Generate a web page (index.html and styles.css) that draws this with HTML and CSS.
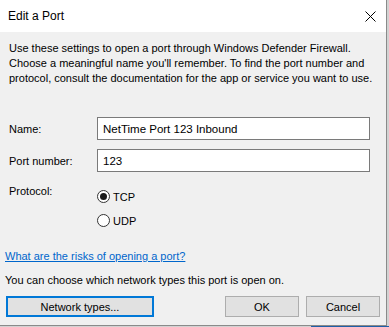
FILE: index.html
```html
<!DOCTYPE html>
<html>
<head>
<meta charset="utf-8">
<link rel="stylesheet" href="styles.css">
</head>
<body>
<div class="dialog">
  <div class="titlebar">
    <span class="title">Edit a Port</span>
    <svg class="close" width="11" height="11" viewBox="0 0 11 11"><path d="M0.5 0.5 L10.5 10.5 M10.5 0.5 L0.5 10.5" stroke="#000" stroke-width="1"/></svg>
  </div>
  <div class="content">
    <p class="intro">Use these settings to open a port through Windows Defender Firewall.<br>Choose a meaningful name you'll remember. To find the port number and<br>protocol, consult the documentation for the app or service you want to use.</p>
    <div class="form">
      <label class="lbl">Name:</label>
      <div class="input">NetTime Port 123 Inbound</div>
      <label class="lbl">Port number:</label>
      <div class="input">123</div>
      <label class="lbl proto">Protocol:</label>
      <div class="radios">
        <div class="radio-row"><span class="radio checked"></span><span>TCP</span></div>
        <div class="radio-row"><span class="radio"></span><span>UDP</span></div>
      </div>
    </div>
    <a class="link" href="#">What are the risks of opening a port?</a>
    <p class="note">You can choose which network types this port is open on.</p>
    <div class="buttons">
      <div class="btn default">Network types...</div>
      <div class="spacer"></div>
      <div class="btn">OK</div>
      <div class="btn">Cancel</div>
    </div>
  </div>
</div>
</body>
</html>
```
FILE: styles.css
```css
html, body {
  margin: 0;
  padding: 0;
}
body {
  background: linear-gradient(#1f5fa8, #1f5fa8) right bottom / 78px 1px no-repeat, #d2d2d2;
  width: 389px;
  height: 327px;
  overflow: hidden;
  font-family: "Liberation Sans", Arial, sans-serif;
  font-size: 11px;
  color: #000;
  white-space: nowrap;
}
.dialog {
  width: 386px;
  height: 325px;
  background: #f0f0f0;
  border-right: 1px solid #8a8a8a;
  border-bottom: 1px solid #8a8a8a;
  display: flex;
  flex-direction: column;
}
.titlebar {
  height: 32px;
  background: #fff;
  display: flex;
  align-items: center;
  justify-content: space-between;
  padding-left: 8px;
  padding-right: 10px;
  flex: none;
}
.title {
  font-size: 12px;
}
.close {
  display: block;
}
.content {
  display: flex;
  flex-direction: column;
  padding: 0 6px 0 5px;
}
.intro {
  margin: 9px 0 0 4px;
  line-height: 15px;
}
.form {
  display: grid;
  grid-template-columns: 88px 273px;
  row-gap: 9px;
  margin: 31px 0 0 4px;
  align-items: center;
}
.input {
  box-sizing: border-box;
  height: 23px;
  border: 1px solid #7a7a7a;
  background: #fff;
  padding-left: 5px;
  display: flex;
  align-items: center;
  font-size: 11.5px;
}
.lbl.proto {
  align-self: start;
  margin-top: 4px;
}
.radios {
  display: flex;
  flex-direction: column;
  gap: 9px;
  margin-top: 8px;
}
.radio-row {
  display: flex;
  align-items: center;
  gap: 3px;
  height: 15px;
}
.radio {
  box-sizing: border-box;
  width: 13px;
  height: 13px;
  border: 1px solid #333;
  border-radius: 50%;
  background: #fff;
  display: flex;
  align-items: center;
  justify-content: center;
}
.radio.checked::after {
  content: "";
  width: 7px;
  height: 7px;
  border-radius: 50%;
  background: #1a1a1a;
}
.link {
  margin-top: 21px;
  color: #0066cc;
  text-decoration: underline;
  line-height: 15px;
  align-self: flex-start;
}
.note {
  margin: 9px 0 0 0;
  line-height: 15px;
}
.buttons {
  display: flex;
  margin-top: 8px;
  margin-left: 1px;
  gap: 7px;
}
.spacer {
  flex: 1;
}
.btn {
  box-sizing: border-box;
  width: 74px;
  height: 21px;
  border: 1px solid #adadad;
  background: #e1e1e1;
  display: flex;
  align-items: center;
  justify-content: center;
}
.btn.default {
  width: 148px;
  border: 2px solid #0078d7;
}
```
